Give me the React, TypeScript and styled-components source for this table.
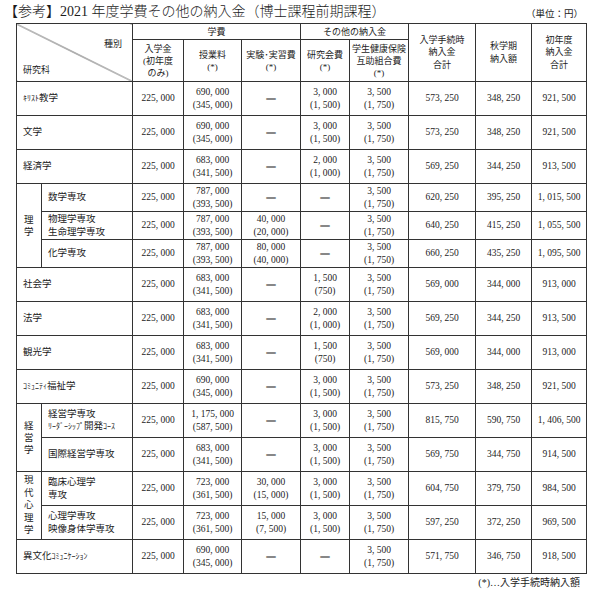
import React from 'react';
import styled, { createGlobalStyle } from 'styled-components';

const Global = createGlobalStyle`
  html, body { margin: 0; padding: 0; background: #fff; }
  body {
    font-family: "Liberation Serif", "Noto Sans CJK JP", serif;
    color: #1c1c1c;
  }
`;

const Page = styled.div`
  width: 600px;
  height: 592px;
  box-sizing: border-box;
  padding: 3px 0 0 4px;
  display: flex;
  flex-direction: column;
`;

const TitleRow = styled.div`
  width: 579px;
  height: 18px;
  margin-bottom: 2px;
  display: flex;
  justify-content: space-between;
  align-items: flex-end;
`;

const Title = styled.div`
  font-size: 14px;
  line-height: 18px;
  font-weight: 300;
  white-space: nowrap;
`;

const Unit = styled.div`
  font-size: 9.5px;
  line-height: 14px;
  white-space: nowrap;
`;

const Table = styled.table`
  border-collapse: collapse;
  table-layout: fixed;
  width: 571px;
  margin-left: 12px;
  font-size: 9.5px;
  line-height: 13px;
  border: 1.5px solid #2a2a2a;
`;

const Col = styled.col<{ $w: number }>`
  width: ${(p) => p.$w}px;
`;

const Row = styled.tr<{ $h: number }>`
  height: ${(p) => p.$h}px;
`;

const Cell = styled.td<{ $small?: boolean }>`
  border: 1px solid #333;
  padding: 0;
  text-align: center;
  vertical-align: middle;
  font-weight: normal;
  white-space: nowrap;
  font-size: ${(p) => (p.$small ? '7.8px' : '9.5px')};
  line-height: ${(p) => (p.$small ? '11px' : '13px')};
`;

const HeadCell = styled(Cell).attrs({ as: 'th' })<{ $lh?: number }>`
  font-size: 9px;
  line-height: ${(p) => p.$lh ?? 12}px;
`;

const DiagCell = styled.th`
  border: 1px solid #333;
  padding: 0;
  font-weight: normal;
  font-size: 9px;
  background: linear-gradient(
    to top right,
    transparent calc(50% - 0.7px),
    #444 50%,
    transparent calc(50% + 0.7px)
  );
`;

const DiagInner = styled.div`
  height: 57px;
  display: flex;
  flex-direction: column;
  justify-content: space-between;
  padding: 14px 10px 4px 6px;
  box-sizing: border-box;
`;

const DiagTop = styled.span`
  align-self: flex-end;
`;

const DiagBottom = styled.span`
  align-self: flex-start;
`;

const NameCell = styled(Cell)`
  text-align: left;
  padding-left: 6px;
  line-height: 12.5px;
`;

const GroupCell = styled(Cell)`
  text-align: left;
  padding-left: 7px;
`;

const Stack = styled.div<{ $lh: number }>`
  display: flex;
  flex-direction: column;
  align-items: flex-start;
  line-height: ${(p) => p.$lh}px;
`;

const Kana = styled.span`
  font-size: 8px;
`;

const Dash = styled.span`
  font-weight: 700;
  color: #2a2a2a;
  text-shadow: 0 0.6px 0 #2a2a2a;
`;

const Footnote = styled.div`
  width: 576px;
  text-align: right;
  font-size: 10px;
  line-height: 14px;
  margin-top: 2px;
`;

type Amount = { main: string; sub?: string } | null;

type DataRow = {
  h: number;
  group?: { chars: string[]; span: number; lh: number };
  inGroup?: boolean;
  name: React.ReactNode;
  entry: string;
  tuition: Amount;
  lab: Amount;
  research: Amount;
  insurance: Amount;
  total: string;
  fall: string;
  year: string;
};

const a = (main: string, sub?: string): Amount => ({ main, sub });
const INS = a('3, 500', '(1, 750)');

const rows: DataRow[] = [
  { h: 34, name: <><Kana>ｷﾘｽﾄ</Kana>教学</>, entry: '225, 000', tuition: a('690, 000', '(345, 000)'), lab: null, research: a('3, 000', '(1, 500)'), insurance: INS, total: '573, 250', fall: '348, 250', year: '921, 500' },
  { h: 34, name: '文学', entry: '225, 000', tuition: a('690, 000', '(345, 000)'), lab: null, research: a('3, 000', '(1, 500)'), insurance: INS, total: '573, 250', fall: '348, 250', year: '921, 500' },
  { h: 34, name: '経済学', entry: '225, 000', tuition: a('683, 000', '(341, 500)'), lab: null, research: a('2, 000', '(1, 000)'), insurance: INS, total: '569, 250', fall: '344, 250', year: '913, 500' },
  { h: 28, group: { chars: ['理', '学'], span: 3, lh: 12 }, name: '数学専攻', entry: '225, 000', tuition: a('787, 000', '(393, 500)'), lab: null, research: null, insurance: INS, total: '620, 250', fall: '395, 250', year: '1, 015, 500' },
  { h: 28, inGroup: true, name: <>物理学専攻<br />生命理学専攻</>, entry: '225, 000', tuition: a('787, 000', '(393, 500)'), lab: a('40, 000', '(20, 000)'), research: null, insurance: INS, total: '640, 250', fall: '415, 250', year: '1, 055, 500' },
  { h: 28, inGroup: true, name: '化学専攻', entry: '225, 000', tuition: a('787, 000', '(393, 500)'), lab: a('80, 000', '(40, 000)'), research: null, insurance: INS, total: '660, 250', fall: '435, 250', year: '1, 095, 500' },
  { h: 34, name: '社会学', entry: '225, 000', tuition: a('683, 000', '(341, 500)'), lab: null, research: a('1, 500', '(750)'), insurance: INS, total: '569, 000', fall: '344, 000', year: '913, 000' },
  { h: 34, name: '法学', entry: '225, 000', tuition: a('683, 000', '(341, 500)'), lab: null, research: a('2, 000', '(1, 000)'), insurance: INS, total: '569, 250', fall: '344, 250', year: '913, 500' },
  { h: 34, name: '観光学', entry: '225, 000', tuition: a('683, 000', '(341, 500)'), lab: null, research: a('1, 500', '(750)'), insurance: INS, total: '569, 000', fall: '344, 000', year: '913, 000' },
  { h: 34, name: <><Kana>ｺﾐｭﾆﾃｨ</Kana>福祉学</>, entry: '225, 000', tuition: a('690, 000', '(345, 000)'), lab: null, research: a('3, 000', '(1, 500)'), insurance: INS, total: '573, 250', fall: '348, 250', year: '921, 500' },
  { h: 34, group: { chars: ['経', '営', '学'], span: 2, lh: 12 }, name: <>経営学専攻<br /><Kana>ﾘｰﾀﾞｰｼｯﾌﾟ</Kana>開発<Kana>ｺｰｽ</Kana></>, entry: '225, 000', tuition: a('1, 175, 000', '(587, 500)'), lab: null, research: a('3, 000', '(1, 500)'), insurance: INS, total: '815, 750', fall: '590, 750', year: '1, 406, 500' },
  { h: 34, inGroup: true, name: '国際経営学専攻', entry: '225, 000', tuition: a('683, 000', '(341, 500)'), lab: null, research: a('3, 000', '(1, 500)'), insurance: INS, total: '569, 750', fall: '344, 750', year: '914, 500' },
  { h: 34, group: { chars: ['現', '代', '心', '理', '学'], span: 2, lh: 12.5 }, name: <>臨床心理学<br />専攻</>, entry: '225, 000', tuition: a('723, 000', '(361, 500)'), lab: a('30, 000', '(15, 000)'), research: a('3, 000', '(1, 500)'), insurance: INS, total: '604, 750', fall: '379, 750', year: '984, 500' },
  { h: 34, inGroup: true, name: <>心理学専攻<br />映像身体学専攻</>, entry: '225, 000', tuition: a('723, 000', '(361, 500)'), lab: a('15, 000', '(7, 500)'), research: a('3, 000', '(1, 500)'), insurance: INS, total: '597, 250', fall: '372, 250', year: '969, 500' },
  { h: 34, name: <>異文化<Kana>ｺﾐｭﾆｹｰｼｮﾝ</Kana></>, entry: '225, 000', tuition: a('690, 000', '(345, 000)'), lab: null, research: null, insurance: INS, total: '571, 750', fall: '346, 750', year: '918, 500' },
];

const widths = [25, 91, 51, 58, 59, 49, 59, 67, 56, 55];

const AmountCell: React.FC<{ v: Amount }> = ({ v }) => (
  <Cell>
    {v === null ? <Dash>―</Dash> : (
      <>
        {v.main}
        {v.sub && <><br />{v.sub}</>}
      </>
    )}
  </Cell>
);

export default function App() {
  return (
    <>
      <Global />
      <Page>
        <TitleRow>
          <Title>【参考】2021 年度学費その他の納入金（博士課程前期課程）</Title>
          <Unit>（単位：円）</Unit>
        </TitleRow>
        <Table>
          <colgroup>
            {widths.map((w, i) => <Col key={i} $w={w} />)}
          </colgroup>
          <thead>
            <Row $h={16}>
              <DiagCell colSpan={2} rowSpan={2}>
                <DiagInner>
                  <DiagTop>種別</DiagTop>
                  <DiagBottom>研究科</DiagBottom>
                </DiagInner>
              </DiagCell>
              <HeadCell colSpan={3}>学費</HeadCell>
              <HeadCell colSpan={2}>その他の納入金</HeadCell>
              <HeadCell rowSpan={2} $lh={12.5}>入学手続時<br />納入金<br />合計</HeadCell>
              <HeadCell rowSpan={2} $lh={12.5}>秋学期<br />納入額</HeadCell>
              <HeadCell rowSpan={2} $lh={12.5}>初年度<br />納入金<br />合計</HeadCell>
            </Row>
            <Row $h={42}>
              <HeadCell>入学金<br />(初年度<br />のみ)</HeadCell>
              <HeadCell>授業料<br />(*)</HeadCell>
              <HeadCell>実験･実習費<br />(*)</HeadCell>
              <HeadCell>研究会費<br />(*)</HeadCell>
              <HeadCell $small>学生健康保険<br />互助組合費<br />(*)</HeadCell>
            </Row>
          </thead>
          <tbody>
            {rows.map((r, i) => (
              <Row key={i} $h={r.h}>
                {r.group && (
                  <GroupCell rowSpan={r.group.span}>
                    <Stack $lh={r.group.lh}>
                      {r.group.chars.map((c, j) => <span key={j}>{c}</span>)}
                    </Stack>
                  </GroupCell>
                )}
                <NameCell colSpan={r.group || r.inGroup ? 1 : 2}>{r.name}</NameCell>
                <Cell>{r.entry}</Cell>
                <AmountCell v={r.tuition} />
                <AmountCell v={r.lab} />
                <AmountCell v={r.research} />
                <AmountCell v={r.insurance} />
                <Cell>{r.total}</Cell>
                <Cell>{r.fall}</Cell>
                <Cell>{r.year}</Cell>
              </Row>
            ))}
          </tbody>
        </Table>
        <Footnote>(*)…入学手続時納入額</Footnote>
      </Page>
    </>
  );
}
